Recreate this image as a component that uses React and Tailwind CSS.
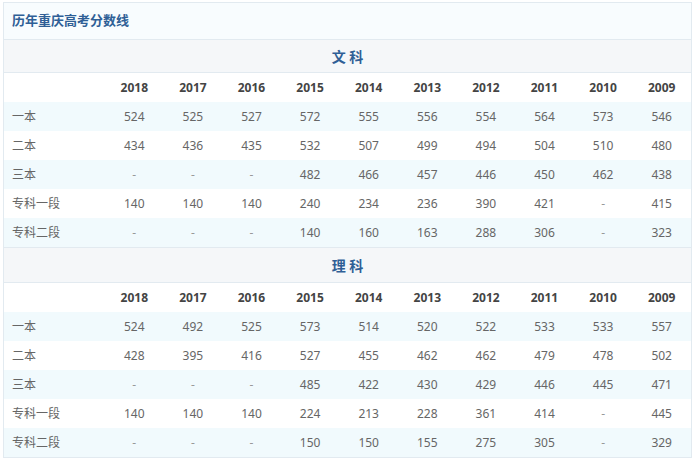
import React from 'react';

const years = ['2018', '2017', '2016', '2015', '2014', '2013', '2012', '2011', '2010', '2009'];

const sections = [
  {
    name: '文 科',
    headH: 'h-[33px]',
    rows: [
      ['一本', '524', '525', '527', '572', '555', '556', '554', '564', '573', '546'],
      ['二本', '434', '436', '435', '532', '507', '499', '494', '504', '510', '480'],
      ['三本', '-', '-', '-', '482', '466', '457', '446', '450', '462', '438'],
      ['专科一段', '140', '140', '140', '240', '234', '236', '390', '421', '-', '415'],
      ['专科二段', '-', '-', '-', '140', '160', '163', '288', '306', '-', '323'],
    ],
  },
  {
    name: '理 科',
    headH: 'h-[35px]',
    rows: [
      ['一本', '524', '492', '525', '573', '514', '520', '522', '533', '533', '557'],
      ['二本', '428', '395', '416', '527', '455', '462', '462', '479', '478', '502'],
      ['三本', '-', '-', '-', '485', '422', '430', '429', '446', '445', '471'],
      ['专科一段', '140', '140', '140', '224', '213', '228', '361', '414', '-', '445'],
      ['专科二段', '-', '-', '-', '150', '150', '155', '275', '305', '-', '329'],
    ],
  },
];

const font = { fontFamily: '"Noto Sans", "Noto Sans CJK SC", sans-serif' };

const Section = ({ name, rows, headH }) => (
  <div className="border-t border-[#e2eaf0]">
    <div className={`${headH} flex items-center justify-center bg-[#f5f7f9] border-b border-[#e2eaf0] text-[14px] font-bold text-[#2f5f96]`}>
      {name}
    </div>
    <div className="grid grid-cols-[101px_repeat(10,1fr)] h-[29px] items-center bg-white text-[12px] font-bold text-[#444]">
      <div />
      {years.map((y) => (
        <div key={y} className="text-center">{y}</div>
      ))}
    </div>
    {rows.map((r, i) => (
      <div
        key={r[0]}
        className={`grid grid-cols-[101px_repeat(10,1fr)] h-[29px] items-center text-[12px] text-[#666] ${i % 2 === 0 ? 'bg-[#f1fafd]' : 'bg-white'}`}
      >
        <div className="pl-[8px]">{r[0]}</div>
        {r.slice(1).map((v, j) => (
          <div key={j} className={`text-center ${v === '-' ? 'text-[#999]' : ''}`}>{v}</div>
        ))}
      </div>
    ))}
  </div>
);

export default function App() {
  return (
    <div className="w-[695px] h-[463px] bg-white pt-[2px]" style={font}>
      <div className="mx-[3px] w-[689px] border border-[#e2eaf0]">
        <div className="h-[36px] flex items-center pl-[8px] bg-[#f8fcfe] text-[13px] font-bold text-[#2f5f96]">
          历年重庆高考分数线
        </div>
        {sections.map((s) => (
          <Section key={s.name} {...s} />
        ))}
      </div>
    </div>
  );
}
